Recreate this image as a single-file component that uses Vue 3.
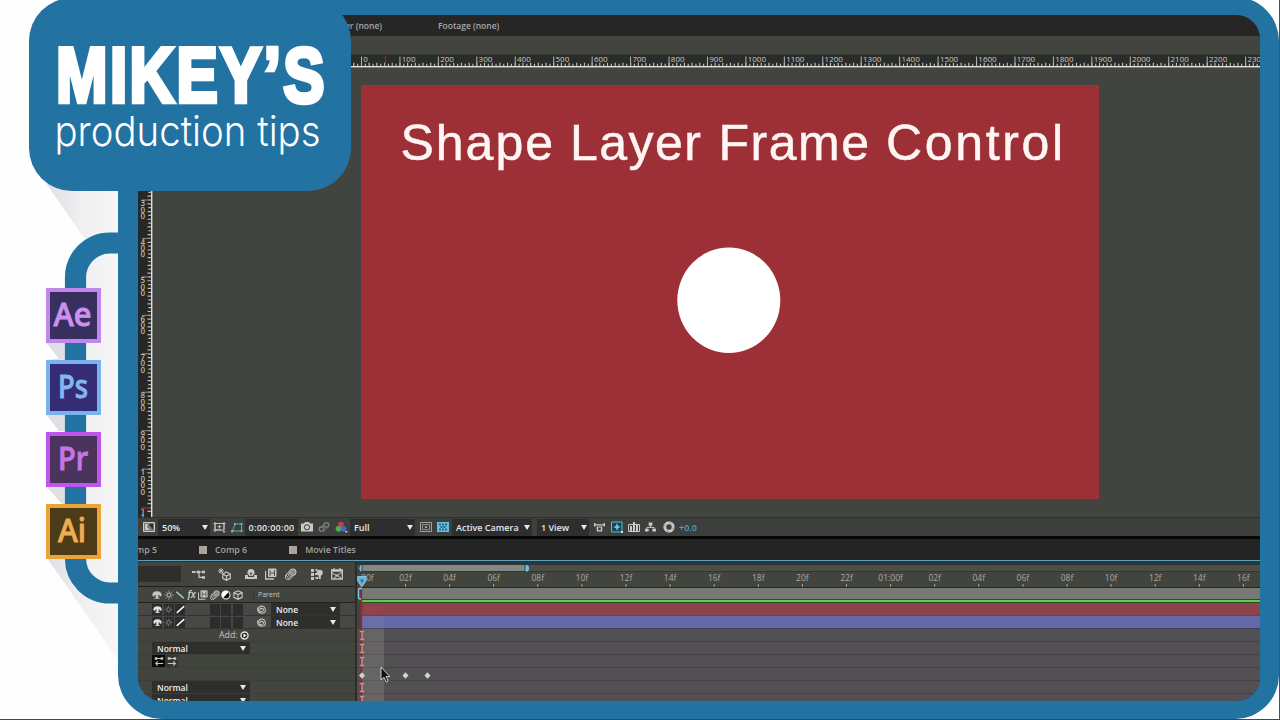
<template>
  <div class="page">
    <!-- long shadows and the pipe that joins the app badges -->
    <svg class="backdrop" viewBox="0 0 118 720">
      <defs>
        <linearGradient id="shade" x1="40" y1="0" x2="118" y2="0" gradientUnits="userSpaceOnUse">
          <stop offset="0" stop-color="#dadce0" />
          <stop offset="0.5" stop-color="#efeff1" />
          <stop offset="1" stop-color="#f6f6f7" />
        </linearGradient>
      </defs>
      <path d="M44 184H118V660L47 558V520L62 503 46 486V432L62 430 46 414V360L62 358 46 342V290H86V240Z" fill="url(#shade)" />
      <path d="M0 180H44L86 241Q66 250 66 288V503H46L66 503 46 485V431H65L46 414V360H65L46 342V288H0Z" fill="#fefefe" />
      <path d="M46 342H66V359H59ZM46 414H66V431H59ZM46 486H66V503H61Z" fill="#dfe0e3" />
      <path d="M120 243H110A34.5 34.5 0 0 0 75.500 277.500V558A34.500 34.500 0 0 0 110 593H120" fill="none" stroke="#2272a2" stroke-width="21.200" />
    </svg>

    <aside class="rail">
      <div v-for="app in apps" :key="app.name" class="badge" :class="app.name.toLowerCase()">
        <svg viewBox="0 0 46 46">
          <text :x="app.x" y="34" :textLength="app.w" lengthAdjust="spacingAndGlyphs">{{ app.name }}</text>
        </svg>
      </div>
    </aside>

    <main class="frame">
      <div class="screen">
        <div class="topbar">
          <span class="layer-tab">Layer (none)</span>
          <span class="footage-tab">Footage (none)</span>
        </div>
        <div class="strip"></div>

        <svg class="h-ruler" width="1122" height="14" viewBox="138 54 1122 14">
          <rect x="138" y="54" width="1122" height="14" fill="#3b3d39" />
          <rect x="138" y="55" width="1122" height="11" fill="#2a2c2a" />
          <path :d="hMinor" stroke="#b9bab6" stroke-width="1.200" />
          <g v-for="n in hMarks" :key="n">
            <path :d="`M${hx(n)} 56.500V66`" stroke="#b4b5b1" stroke-width="1" />
            <text :x="hx(n) + 1.800" y="62.200" class="ruler-text">{{ n }}</text>
          </g>
          <path d="M385.500 56V66" stroke="#9e2528" stroke-width="1.200" />
          <rect x="138" y="66" width="1122" height="1.400" fill="#e4e4e1" />
        </svg>

        <div class="viewer">
          <svg class="v-ruler" width="15" height="449" viewBox="138 68 15 449">
            <rect x="138" y="68" width="14" height="449" fill="#262827" />
            <path :d="vMinor" stroke="#b9bab6" stroke-width="1.200" />
            <g v-for="n in vMarks" :key="n">
              <path :d="`M142 ${vy(n)}H151`" stroke="#8d8e8a" stroke-width="1" />
              <text
                v-for="(digit, i) in String(n)"
                :key="i"
                x="140.500"
                :y="vy(n) + 6.200 + i * 6.400"
                class="ruler-text tall">{{ digit }}</text>
            </g>
            <path d="M141 508H150" stroke="#8e2226" stroke-width="2" />
            <rect x="151" y="68" width="1.400" height="449" fill="#dededb" />
          </svg>
          <div class="stage">
            <div class="comp">
              <svg width="738" height="415" viewBox="361 84.500 738 415">
                <text
                  v-for="word in title"
                  :key="word.text"
                  :x="word.x"
                  y="159.600"
                  class="comp-title"
                  :textLength="word.w"
                  lengthAdjust="spacing">{{ word.text }}</text>
                <ellipse cx="728.800" cy="299.800" rx="51.500" ry="52.700" fill="#fff" />
              </svg>
            </div>
          </div>
        </div>

        <!-- viewer footer controls -->
        <div class="controls">
          <div
            v-for="(c, i) in controls"
            :key="i"
            class="control"
            :class="c.kind"
            :style="{ width: c.w + 'px', marginLeft: c.gap + 'px' }">
            <template v-if="c.text">
              <span>{{ c.text }}</span>
              <i v-if="c.kind === 'select'" class="caret"></i>
            </template>
            <svg v-else class="icon"><use :href="'#' + c.icon" /></svg>
          </div>
        </div>

        <div class="tabs">
          <div class="tab first">Comp 5</div>
          <div class="tab"><i></i>Comp 6</div>
          <div class="tab last"><i></i>Movie Titles</div>
        </div>

        <div class="timeline">
          <section class="layers">
            <div class="tools">
              <div class="search"></div>
              <svg v-for="t in tools" :key="t" class="tool" :class="t"><use :href="'#' + t" /></svg>
            </div>
            <div class="columns">
              <svg v-for="s in switches" :key="s" class="switch"><use :href="'#' + s" /></svg>
              <span class="parent">Parent</span>
            </div>
            <div v-for="n in 2" :key="n" class="row layer">
              <span class="cell"><svg><use href="#shy" /></svg></span>
              <span class="cell dim"><svg><use href="#sun" /></svg></span>
              <span class="cell"><svg><use href="#quality" /></svg></span>
              <span class="cell empty"></span>
              <span class="cell"></span>
              <span class="cell"></span>
              <svg class="whip"><use href="#spiral" /></svg>
              <div class="drop none">None<i class="caret"></i></div>
            </div>
            <div class="row add">
              <span>Add:</span>
              <svg><use href="#play" /></svg>
            </div>
            <div class="row"><div class="drop mode">Normal<i class="caret"></i></div></div>
            <div class="row paths">
              <span class="on"><svg><use href="#dirl" /></svg></span>
              <span><svg><use href="#dirr" /></svg></span>
            </div>
            <div class="row"></div>
            <div class="row"><div class="drop mode">Normal<i class="caret"></i></div></div>
            <div class="row"><div class="drop mode">Normal<i class="caret"></i></div></div>
          </section>

          <section class="tracks">
            <div class="navigator"><div class="range"></div></div>
            <svg class="time-ruler" width="903" height="15" viewBox="357 572 903 15">
              <g v-for="(t, i) in times" :key="i">
                <text :x="361.400 + i * 44.100 + (i ? 0 : 6)" y="581.300" class="time-text">{{ t }}</text>
                <path :d="`M${361.400 + i * 44.100} 584V587`" stroke="#a3a49f" />
              </g>
            </svg>
            <div class="work-area"></div>
            <div class="cache"></div>
            <div class="track red"><span>None</span></div>
            <div class="track blue"></div>
            <div v-for="n in 6" :key="n" class="track"></div>

            <svg class="overlay" width="903" height="140" viewBox="357 561 903 140">
              <rect x="361" y="616" width="23" height="13" fill="#a9a99f" opacity="0.100" />
              <rect x="361" y="629" width="23" height="72" fill="#a9a99f" opacity="0.240" />
              <path d="M361.300 586V701" stroke="#8f2a33" stroke-width="1.800" />
              <path d="M362 564.700H360Q357.500 568.300 360 571.900H362ZM525 564.700H528.500Q531 568.300 528.500 571.900H525Z" fill="#6cc3e9" stroke="#15323f" stroke-width="0.800" />
              <path d="M362 588.500H359.500Q358.500 588.500 358.500 590V597Q358.500 599 360 599H361" fill="none" stroke="#79c7e5" stroke-width="1.500" />
              <path d="M357.600 576.500H366V581L361.800 586.800 357.600 581Z" fill="#62b6dd" stroke="#a5def3" stroke-width="0.700" />
              <path d="M360 579.500H364L362 583.500Z" fill="#2a7091" />
              <path v-for="y in beams" :key="y" :d="`M359.800 ${y - 4}H364.200M359.800 ${y + 4}H364.200M362 ${y - 4}V${y + 4}`" stroke="#d58c88" stroke-width="1.400" />
              <path v-for="x in keys" :key="x" :d="`M${x - 3} 675.500L${x} 672.300 ${x + 3} 675.500 ${x} 678.700Z`" fill="#d3d3d1" />
              <path d="M381 667V680L383.900 677.300 386.200 682 388.200 681 386 676.600H389.800Z" fill="#111" stroke="#dededc" stroke-width="0.900" />
            </svg>
          </section>
        </div>
      </div>
    </main>

    <header class="logo">
      <svg width="322" height="193" viewBox="29 -2 322 193">
        <text x="56" y="101.800" class="logo-name" textLength="271" lengthAdjust="spacingAndGlyphs">MIKEY’S</text>
        <text x="54.500" y="145.500" class="logo-sub" textLength="266" lengthAdjust="spacingAndGlyphs">production tips</text>
      </svg>
    </header>

    <!-- icon sheet -->
    <svg class="sheet">
      <symbol id="picture" viewBox="0 0 12 12"><path d="M.5 1.500H11.500V10.500H.5Z" fill="#777" stroke="currentColor" /><path d="M2 9V3H5L4 6 7 9Z" fill="currentColor" /><path d="M6 3H10V8.500Z" fill="#222" /></symbol>
      <symbol id="grid" viewBox="0 0 12 12"><path d="M1.500 2.500H10.500V9H1.500ZM0 2.500H12M0 9H8M1.500 1V11M10.500 1V9M6 4V7.500M4 5.700H8" fill="none" stroke="currentColor" stroke-width="0.900" /><path d="M9 10H12L10.500 12Z" fill="currentColor" /></symbol>
      <symbol id="mask" viewBox="0 0 12 12"><path d="M1.500 10L4 3H10.500V10Z" fill="none" stroke="#4eaeba" /><path d="M0 9H2.500V11.500H0ZM3 2H5V4H3ZM9.500 2H11.500V4H9.500ZM9.500 9H11.500V11H9.500Z" fill="#5cb8c4" /></symbol>
      <symbol id="camera" viewBox="0 0 12 12"><path d="M0 2.500H3L4 1H8L9 2.500H12V10.500H0Z" fill="currentColor" /><circle cx="6" cy="6.300" r="2.600" fill="none" stroke="#393b38" /></symbol>
      <symbol id="link" viewBox="0 0 12 12"><circle cx="3.500" cy="8" r="2.300" fill="none" stroke="#7b7d79" stroke-width="1.400" /><circle cx="8.500" cy="4" r="2.300" fill="none" stroke="#7b7d79" stroke-width="1.400" /><path d="M4 5L7 2M6 10L9 7" stroke="#7b7d79" /></symbol>
      <symbol id="rgb" viewBox="0 0 12 12"><circle cx="5.500" cy="3.500" r="2.800" fill="#cf3b3e" /><circle cx="3" cy="7.800" r="2.800" fill="#51b04c" /><circle cx="8" cy="7.800" r="2.800" fill="#4564d2" /><path d="M9.500 10H12L10.700 12Z" fill="#ddd" /></symbol>
      <symbol id="region" viewBox="0 0 12 12"><path d="M.5 1.500H11.500V10.500H.5Z" fill="none" stroke="#a3a3a0" /><path d="M2.500 3.500H9.500V8.500H2.500Z" fill="none" stroke="#8c8c89" /><path d="M5 5H7V7H5Z" fill="#a3a3a0" /></symbol>
      <symbol id="checker" viewBox="0 0 12 12"><path d="M0 1H12V11H0Z" fill="#61c0dd" /><path d="M2 2.500H4V4.500H2ZM5 2.500H7V4.500H5ZM8 2.500H10V4.500H8ZM3.500 5H5.500V7H3.500ZM6.500 5H8.500V7H6.500ZM2 7.500H4V9.500H2ZM5 7.500H7V9.500H5ZM8 7.500H10V9.500H8Z" fill="#286d88" /></symbol>
      <symbol id="aspect" viewBox="0 0 12 12"><path d="M0 1.500H1.500V3H10.500V1.500H12V5.500H10.500V4.300H1.500V5.500H0ZM3 5.500H9V11H3Z" fill="currentColor" /><path d="M4.500 6.500H7.500V9.500H4.500Z" fill="#444" /></symbol>
      <symbol id="fast" viewBox="0 0 12 12"><path d="M.5 1H11V11H.5Z" fill="#1f4451" stroke="#5bbedd" /><path d="M6 2L7 4.800 9.500 6 7 7.200 6 10 5 7.200 2.500 6 5 4.800Z" fill="#69cae7" /><path d="M10 10H12V12H10Z" fill="#bde7f2" /></symbol>
      <symbol id="bars" viewBox="0 0 12 12"><path d="M.5 3.500H11.500V10.500H.5Z" fill="none" stroke="currentColor" /><path d="M2 5H4V10H2ZM5 1H7V10H5ZM8 4H10V10H8Z" fill="currentColor" /></symbol>
      <symbol id="flow" viewBox="0 0 12 12"><path d="M4 1H8V4.500H4ZM0 8H4V11H0ZM8 8H12V11H8Z" fill="currentColor" /><path d="M6 4V6.500M2 8V6.500H10V8" fill="none" stroke="currentColor" /></symbol>
      <symbol id="aperture" viewBox="0 0 12 12"><circle cx="6" cy="6" r="4.200" fill="none" stroke="currentColor" stroke-width="3" /><path d="M5 0L9 3M12 5L9 9M7 12L3 9M0 7L3 3" stroke="#777" stroke-width="0.600" /></symbol>
      <symbol id="tree" viewBox="0 0 13 12"><path d="M0 4H12M7 4V9.300H12" fill="none" stroke="currentColor" stroke-width="1.200" /><path d="M0 3H3V5H0ZM5 2.700H8V5.300H5ZM10 2.800H13V5.200H10ZM10 8.200H13V10.800H10Z" fill="currentColor" /></symbol>
      <symbol id="draft" viewBox="0 0 13 13"><path d="M3 0V6M0 3H6M1 1L5 5M5 1L1 5" stroke="currentColor" stroke-width="0.900" /><path d="M8.500 4L12.300 6V10.300L8.500 12.300 4.700 10.300V6ZM4.700 6L8.500 8 12.300 6M8.500 8V12" fill="none" stroke="currentColor" stroke-width="1.200" /></symbol>
      <symbol id="shyall" viewBox="0 0 12 12"><path d="M2.500 6Q2 1 6 1T9.500 6L8 7V8H4V7ZM0 7H3V9H9V7H12V11H0Z" fill="currentColor" /><path d="M6 4V9M4.500 5.500H7.500" stroke="#484a46" stroke-width="0.700" /></symbol>
      <symbol id="blend" viewBox="0 0 12 12"><path d="M3.500 1H11V8.500H3.500Z" fill="currentColor" stroke="currentColor" /><path d="M.5 3V11H9" fill="none" stroke="currentColor" stroke-width="1.300" /><path d="M5 2V8M9.500 2V8M5 5H9.500" stroke="#454743" stroke-width="0.900" /></symbol>
      <symbol id="blur" viewBox="0 0 12 12"><circle cx="7.800" cy="4.200" r="3.300" fill="#8d8e8a" stroke="currentColor" /><path d="M3.600 3.500A3.500 3.500 0 0 0 8 8.600M2 5A3.500 3.500 0 0 0 6.500 10M.8 7A3 3 0 0 0 4.800 11.300" fill="none" stroke="currentColor" /></symbol>
      <symbol id="brain" viewBox="0 0 12 12"><path d="M0 1H3V4H0ZM0 5H3V8H0ZM0 9H3V12H0ZM4.500 1H6.500V3H4.500ZM4.500 9H7V11H4.500Z" fill="currentColor" /><circle cx="8.700" cy="4.700" r="3" fill="currentColor" /><path d="M7.600 7H9.800V11H7.600ZM4 5H6V7H4Z" fill="currentColor" /></symbol>
      <symbol id="graph" viewBox="0 0 12 12"><path d="M.7 3H11.300V11H.7ZM0 2H12M3 0V3M9 0V3" fill="none" stroke="currentColor" stroke-width="1.300" /><path d="M1 5L10 10M3 10L11 4M4 7H8" fill="none" stroke="currentColor" /></symbol>
      <symbol id="shy" viewBox="0 0 12 12"><path d="M.5 7Q0 1.500 6 1.500T11.500 7L9 8V6H7.500V10H4.500V6H3V8Z" fill="currentColor" /><path d="M3 10H9" stroke="currentColor" /></symbol>
      <symbol id="sun" viewBox="0 0 12 12"><circle cx="6" cy="6" r="2.500" fill="none" stroke="currentColor" stroke-width="1.200" /><path d="M6 .5V2M6 10V11.500M.5 6H2M10 6H11.500M2 2L3.200 3.200M8.800 8.800L10 10M10 2L8.800 3.200M3.200 8.800L2 10" stroke="currentColor" /></symbol>
      <symbol id="slash" viewBox="0 0 12 12"><path d="M1.500 2L5 5M5 5L10.500 10" stroke="currentColor" stroke-width="1.700" /></symbol>
      <symbol id="quality" viewBox="0 0 12 12"><path d="M1 10.500L11 1.500" stroke="#fff" stroke-width="1.800" /></symbol>
      <symbol id="fx" viewBox="0 0 12 12"><text x="0.500" y="9.500" class="fx-text">fx</text></symbol>
      <symbol id="half" viewBox="0 0 12 12"><circle cx="6" cy="6" r="4.800" fill="#111" stroke="#eee" stroke-width="1.300" /><path d="M2.300 9.700A5 5 0 0 1 9.300 2.300Z" fill="#fff" /></symbol>
      <symbol id="cube" viewBox="0 0 12 12"><path d="M6 1L11 3.200V8.800L6 11.200 1 8.800V3.200ZM1 3.200L6 5.500 11 3.200M6 5.500V11" fill="none" stroke="currentColor" stroke-width="1.300" /></symbol>
      <symbol id="spiral" viewBox="0 0 12 12"><path d="M1 3Q0 11 6 11T11 6T6 1.500T2.500 6T6 9T8.500 6T6 4.500T5 6.500" fill="none" stroke="currentColor" stroke-width="1.400" /></symbol>
      <symbol id="play" viewBox="0 0 12 12"><circle cx="6" cy="6" r="4.700" fill="#1e1e1e" stroke="#ddd" stroke-width="2" /><path d="M4.500 3L8.800 6 4.500 9Z" fill="#eee" /></symbol>
      <symbol id="dirl" viewBox="0 0 12 12"><path d="M1 3H11M2 9H11M4.500 6.500L2 9 4.500 11.500" fill="none" stroke="currentColor" stroke-width="1.300" /><path d="M1 1.500H4V4.500H1ZM8 1.500H11V4.500H8Z" fill="currentColor" /></symbol>
      <symbol id="dirr" viewBox="0 0 12 12"><path d="M1 3H11M1 9H10M7.500 6.500L10 9 7.500 11.500" fill="none" stroke="currentColor" stroke-width="1.300" /><path d="M1 1.500H4V4.500H1ZM8 1.500H11V4.500H8Z" fill="currentColor" /></symbol>
    </svg>
  </div>
</template>

<script setup>
const apps = [
  { name: 'Ae', x: 3.5, w: 38 },
  { name: 'Ps', x: 8, w: 30 },
  { name: 'Pr', x: 8, w: 30 },
  { name: 'Ai', x: 8, w: 28 }
]

const title = [
  { text: 'Shape', x: 400.5, w: 152.5 },
  { text: 'Layer', x: 570, w: 131 },
  { text: 'Frame', x: 718.5, w: 150.5 },
  { text: 'Control', x: 886, w: 177 }
]

// comp pixels are shown at a little over a third of their size
const SCALE = 0.3844
const hx = (n) => 361.5 + n * SCALE
const vy = (n) => 84.7 + n * SCALE

const hMarks = Array.from({ length: 24 }, (_, i) => i * 100)
const vMarks = Array.from({ length: 9 }, (_, i) => 300 + i * 100)

const hMinor = Array.from({ length: 240 }, (_, i) => {
  const n = (i - 5) * 10
  return `M${hx(n)} ${i % 2 ? 62.8 : 63.8}V66`
}).join('')

const vMinor = Array.from({ length: 112 }, (_, i) => `M${i % 2 ? 147.5 : 148.3} ${vy(i * 10)}H151`).join('')

const controls = [
  { kind: 'glyph', icon: 'picture', w: 12, gap: 5 },
  { kind: 'select', text: '50%', w: 52, gap: 3 },
  { kind: 'glyph', icon: 'grid', w: 13, gap: 3 },
  { kind: 'glyph', icon: 'mask', w: 12, gap: 5 },
  { kind: 'time', text: '0:00:00:00', w: 53, gap: 2 },
  { kind: 'glyph', icon: 'camera', w: 12, gap: 3 },
  { kind: 'glyph', icon: 'link', w: 12, gap: 5 },
  { kind: 'glyph', icon: 'rgb', w: 13, gap: 5 },
  { kind: 'select', text: 'Full', w: 65, gap: 2 },
  { kind: 'glyph', icon: 'region', w: 12, gap: 5 },
  { kind: 'glyph', icon: 'checker', w: 12, gap: 5 },
  { kind: 'select', text: 'Active Camera', w: 80, gap: 3 },
  { kind: 'select', text: '1 View', w: 52, gap: 5 },
  { kind: 'glyph', icon: 'aspect', w: 11, gap: 5 },
  { kind: 'glyph', icon: 'fast', w: 12, gap: 6 },
  { kind: 'glyph', icon: 'bars', w: 12, gap: 5 },
  { kind: 'glyph', icon: 'flow', w: 11, gap: 5 },
  { kind: 'glyph', icon: 'aperture', w: 12, gap: 7 },
  { kind: 'exposure', text: '+0.0', w: 24, gap: 4 }
]

const tools = ['tree', 'draft', 'shyall', 'blend', 'blur', 'brain', 'graph']
const switches = ['shy', 'sun', 'slash', 'fx', 'blend', 'blur', 'half', 'cube']

const pad = (n) => String(n).padStart(2, '0')
const times = Array.from({ length: 21 }, (_, i) => (i === 12 ? '01:00f' : pad((i * 2) % 24) + 'f'))

const beams = [635.5, 648.5, 661.5, 687.5, 700.5]
const keys = [362, 405.5, 427.5]
</script>

<style>
body {
  background: #fff;
}
</style>

<style scoped>
.page {
  position: relative;
  box-sizing: border-box;
  width: 1280px;
  height: 720px;
  overflow: hidden;
  display: flex;
  background: #fefefe;
  border-right: 1px solid #45535a;
  border-bottom: 1px solid #46464a;
  font-family: "Open Sans", "Noto Sans", sans-serif;
}

.backdrop {
  position: absolute;
  left: 0;
  top: 0;
  width: 118px;
  height: 720px;
}

.sheet {
  position: absolute;
  width: 0;
  height: 0;
}

.rail {
  position: relative;
  box-sizing: border-box;
  flex: none;
  width: 118px;
  padding: 287.5px 0 0 46px;
  display: flex;
  flex-direction: column;
  gap: 17px;
}

.badge {
  box-sizing: border-box;
  width: 55px;
  height: 55px;
  border: 4.5px solid;
}

.badge svg {
  display: block;
  width: 46px;
  height: 46px;
}

.badge text {
  font-size: 32px;
  font-weight: 500;
  font-family: "Noto Sans", "Open Sans", sans-serif;
  fill: currentColor;
  stroke: currentColor;
  stroke-width: 0.9px;
}

.badge.ae {
  border-color: #c087ec;
  background: #37305f;
  color: #cb91f0;
}

.badge.ps {
  border-color: #7ab2ed;
  background: #342d76;
  color: #83b7ef;
}

.badge.pr {
  border-color: #c254ee;
  background: #4b345b;
  color: #c675e7;
}

.badge.ai {
  border-color: #eba536;
  background: #4b3c17;
  color: #f0ac50;
}

.frame {
  position: relative;
  box-sizing: border-box;
  flex: none;
  width: 1161px;
  height: 722px;
  margin-top: -3px;
  border: solid #2272a2;
  border-width: 18px 19px 18px 20px;
  border-radius: 44px;
  background: #2272a2;
}

.screen {
  width: 1122px;
  height: 686px;
  border-radius: 24px;
  overflow: hidden;
  display: flex;
  flex-direction: column;
  background: #42443e;
}

.topbar {
  flex: none;
  height: 21px;
  background: #262626;
  color: #a8a8a6;
  font-size: 8.5px;
  font-weight: 600;
  line-height: 21px;
  display: flex;
}

.layer-tab {
  width: 106px;
  padding-right: 56px;
  margin-left: 138px;
  text-align: right;
}

.strip {
  flex: none;
  height: 18px;
  background: #42443e;
}

.h-ruler {
  flex: none;
  display: block;
}

.ruler-text {
  font-family: "Open Sans", sans-serif;
  font-size: 8px;
  fill: #c8c8c4;
}

.ruler-text.tall {
  font-weight: 600;
  fill: #b9bab6;
}

.viewer {
  flex: none;
  height: 449px;
  display: flex;
  background: #42443f;
}

.v-ruler {
  flex: none;
  display: block;
}

.stage {
  padding: 16.5px 0 0 208px;
}

.comp {
  width: 738px;
  height: 414.5px;
  overflow: hidden;
  background: #9d3036;
}

.comp svg {
  display: block;
}

.comp-title {
  font-family: "Liberation Sans", Arial, sans-serif;
  font-size: 50px;
  fill: #fff6f3;
  stroke: #fff6f3;
  stroke-width: 0.5px;
}

.controls {
  box-sizing: border-box;
  flex: none;
  height: 19px;
  border-top: 1px solid #30312f;
  background: #3d3f3c;
  display: flex;
  align-items: center;
  color: #c9c9c6;
}

.control {
  box-sizing: border-box;
  flex: none;
  height: 12px;
  display: flex;
  align-items: center;
  white-space: nowrap;
  font-size: 9px;
  font-weight: 600;
}

.control .icon {
  width: 100%;
  height: 12px;
}

.control.select {
  height: 17px;
  padding: 0 2px 0 4px;
  justify-content: space-between;
  background: #2d2e2d;
  color: #e8e8e6;
}

.control.time {
  height: 17px;
  justify-content: center;
  background: #2d2e2d;
  color: #e8e8e6;
  letter-spacing: 0.25px;
}

.control.exposure {
  color: #4ba5c7;
}

.caret {
  width: 0;
  height: 0;
  border-left: 3.5px solid transparent;
  border-right: 3.5px solid transparent;
  border-top: 5px solid #e8e8e6;
}

.tabs {
  box-sizing: border-box;
  flex: none;
  height: 24px;
  border-top: 3px solid #080808;
  background: #242424;
  color: #a3a29e;
  font-size: 8.8px;
  font-weight: 600;
  display: flex;
}

.tab {
  display: flex;
  align-items: center;
  height: 22px;
  margin-left: 42px;
  white-space: nowrap;
}

.tab.first {
  justify-content: flex-end;
  width: 33px;
  margin-left: -14px;
}

.tab.last {
  margin-left: 42px;
}

.tab i {
  width: 8px;
  height: 8px;
  margin-right: 8px;
  background: #aaa597;
}

.timeline {
  box-sizing: border-box;
  flex: 1;
  display: flex;
  border-top: 1px solid #629fba;
}

.layers {
  box-sizing: border-box;
  flex: none;
  width: 219px;
  border-top: 1px solid #263439;
  border-right: 2px solid #2c2d2b;
  background: #42443e;
  color: #c6c6c2;
}

.tools {
  box-sizing: border-box;
  height: 25px;
  border-bottom: 1px solid #1e1f1e;
  display: flex;
  align-items: center;
}

.search {
  width: 43px;
  height: 16px;
  margin-right: 11px;
  background: #2e2f2d;
}

.tool {
  flex: none;
  width: 12px;
  height: 12px;
}

.tool.tree {
  width: 13px;
}

.tool.draft {
  width: 13px;
  height: 13px;
  margin-left: 13px;
}

.tool.shyall {
  margin-left: 14px;
}

.tool.blend,
.tool.blur,
.tool.graph {
  margin-left: 8px;
}

.tool.brain {
  margin-left: 14px;
}

.columns {
  box-sizing: border-box;
  height: 16px;
  padding: 1px 0 0 14px;
  border-bottom: 1px solid #222321;
  display: flex;
  align-items: center;
  gap: 1.5px;
}

.switch {
  width: 10px;
  height: 10px;
  flex: none;
}

.fx-text {
  font-size: 12px;
  font-weight: 600;
  font-style: italic;
  fill: #d0d0cc;
}

.parent {
  margin-left: 9px;
  padding-left: 4px;
  border-left: 1px solid #333431;
  font-size: 7px;
  line-height: 10px;
}

.row {
  box-sizing: border-box;
  height: 13px;
  padding-left: 14px;
  border-bottom: 1px solid #3b3d38;
  display: flex;
  align-items: center;
}

.row.layer {
  background: #474846;
  border-color: #333431;
}

.cell {
  flex: none;
  width: 10px;
  height: 11px;
  margin-right: 1.5px;
  background: #2b2c2b;
  color: #e0e0dc;
  display: flex;
  align-items: center;
  justify-content: center;
}

.cell svg {
  width: 9px;
  height: 9px;
}

.cell.dim {
  color: #8d8e8a;
}

.cell.empty {
  margin-left: 23px;
}

.whip {
  flex: none;
  width: 9px;
  height: 9px;
  margin: 0 5px 0 13px;
}

.drop {
  box-sizing: border-box;
  height: 12px;
  padding: 0 4px 0 5px;
  display: flex;
  align-items: center;
  justify-content: space-between;
  background: #2e2f2d;
  color: #ececea;
  font-size: 8.5px;
  font-weight: 600;
}

.drop.none {
  width: 69px;
}

.drop.mode {
  width: 98px;
}

.row.add {
  gap: 2px;
  padding-left: 81px;
  font-size: 8.8px;
}

.add svg {
  width: 9px;
  height: 9px;
}

.paths span {
  width: 13px;
  height: 12px;
  display: flex;
  align-items: center;
  justify-content: center;
  background: #353634;
}

.paths span.on {
  background: #080808;
}

.paths svg {
  width: 10px;
  height: 10px;
}

.tracks {
  position: relative;
  flex: none;
  width: 903px;
  background: #42443e;
}

.navigator {
  box-sizing: border-box;
  height: 11px;
  padding-left: 4px;
  border-top: 4px solid #2a373a;
  border-bottom: 1px solid #343530;
  background: #504e44;
}

.range {
  width: 166px;
  height: 6px;
  background: #858782;
}

.time-ruler {
  display: block;
}

.time-text {
  font-family: "Open Sans", sans-serif;
  font-size: 8.5px;
  fill: #a9aaa5;
  text-anchor: middle;
}

.work-area {
  box-sizing: border-box;
  height: 12px;
  margin-left: 4px;
  border-top: 1px solid #252624;
  background: #777a74;
}

.cache {
  box-sizing: border-box;
  height: 4px;
  margin-left: 4px;
  background: #5ecb51;
  border-top: 1px solid #27531f;
  border-bottom: 1px solid #2c4d24;
}

.track {
  box-sizing: border-box;
  height: 13px;
  border-bottom: 1.5px solid #444244;
  background: #525052;
}

.track.red {
  margin-left: 4px;
  background: #8c434c;
  border-color: #67415f;
  color: #a34650;
  font-size: 7px;
  line-height: 12px;
}

.track.red span {
  padding-left: 4px;
}

.track.blue {
  margin-left: 4px;
  background: #6569aa;
  border-color: #41405a;
}

.overlay {
  position: absolute;
  left: 0;
  top: 0;
}

.logo {
  position: absolute;
  left: 29px;
  top: -2px;
  width: 322px;
  height: 193px;
  border-radius: 43px;
  background: #2272a2;
}

.logo-name {
  font-family: "Liberation Sans", Arial, sans-serif;
  font-size: 77px;
  font-weight: 700;
  letter-spacing: 3px;
  fill: #fff;
  stroke: #fff;
  stroke-width: 4.5px;
}

.logo-sub {
  font-family: Inter, "Liberation Sans", sans-serif;
  font-size: 41.5px;
  font-weight: 300;
  fill: #fff;
}
</style>
